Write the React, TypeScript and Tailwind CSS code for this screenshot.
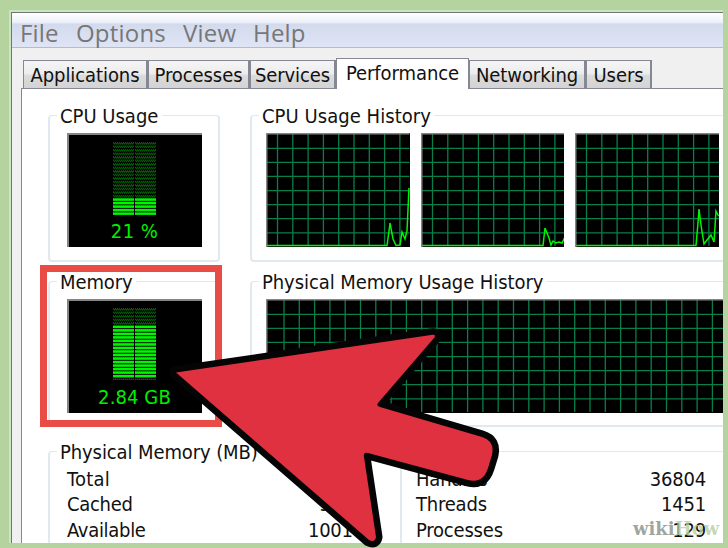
import type { ReactNode } from "react";

const ui = "[font-family:'DejaVu_Sans_Condensed','DejaVu_Sans',sans-serif] [font-stretch:condensed]";

function Group({ title, legend, className, children }: { title: string; legend: string; className: string; children?: ReactNode }) {
  return (
    <fieldset className={`shrink-0 min-w-0 rounded-[4px] border-2 border-t border-[#e1e9f0] ${className}`}>
      <legend className={`ml-[7px] h-[26px] whitespace-nowrap pl-[3px] text-[20px] leading-[28px] ${legend}`}>{title}</legend>
      {children}
    </fieldset>
  );
}

function Meter({ lit, total, value, label }: { lit: number; total: number; value: string; label: string }) {
  return (
    <div className="ml-[17px] mt-[5px] flex h-[114px] w-[135px] flex-col items-center border-l-2 border-t-2 border-[#858585] bg-black pr-[2px] pt-[7px]">
      <svg width="44" height="73" viewBox="0 0 44 73">
        <defs>
          <pattern id="unlit" width="2" height="3.52" patternUnits="userSpaceOnUse">
            <path d="M0 .4h1v1H0zM1 1.3h1v1H1z" fill="#00b800" />
          </pattern>
        </defs>
        <rect width="21" height="72" fill="url(#unlit)" />
        <rect x="22" width="21" height="72" fill="url(#unlit)" />
        {Array.from({ length: lit }, (_, i) => (
          <g key={i} fill="#00f500">
            <rect x="0" y={(total - lit + i) * 3.52} width="21" height="2.5" />
            <rect x="22" y={(total - lit + i) * 3.52} width="21" height="2.5" />
          </g>
        ))}
      </svg>
      <span className={`mt-[3px] whitespace-nowrap text-[20px] leading-[27px] text-[#00f000] ${label}`}>{value}</span>
    </div>
  );
}

function Graph({ width, first, points }: { width: number; first: number; points?: string }) {
  const cols = Array.from({ length: Math.ceil((width - first) / 15.3) }, (_, i) => first + i * 15.3);
  return (
    <svg className="shrink-0 bg-black" width={width} height="114" viewBox={`0 0 ${width} 114`}>
      {cols.map((x) => (
        <path key={x} d={`M${x} 1V113`} stroke="#087f49" strokeWidth="1.3" />
      ))}
      {Array.from({ length: 7 }, (_, i) => (
        <path key={i} d={`M1 ${15.3 + i * 14.08}H${width}`} stroke="#087f49" strokeWidth="1.3" />
      ))}
      {points && <polyline points={points} fill="none" stroke="#00f500" strokeWidth="1.5" />}
      <path d={`M.75 114V.75H${width}`} fill="none" stroke="#858585" strokeWidth="1.5" />
    </svg>
  );
}

const tabs = [
  { name: "Applications", style: "w-[125px]" },
  { name: "Processes", style: "w-[102px]" },
  { name: "Services", style: "w-[86px]" },
  { name: "Performance", style: "w-[133px]" },
  { name: "Networking", style: "w-[117px]" },
  { name: "Users", style: "w-[66px]" },
];

export default function App() {
  return (
    <div className={`relative flex h-[548px] w-[728px] overflow-hidden bg-[#b4d39e] pl-[9px] pt-[10px] text-[#111] ${ui}`}>
      <div className="h-[533px] w-[714px] overflow-hidden border-l-2 border-t-2 border-[#cbe5bd]">
        <div className="flex h-[531px] flex-col border-l border-t border-[#6e7772] bg-[#f0f0f0]">
          <nav className="flex h-[35px] shrink-0 border-b border-[#b3bad2] bg-[linear-gradient(#fff_0%,#eef1f9_27%,#d3daed_33%,#dfe5f5_100%)] pl-[8px] text-[24px] leading-[39px] tracking-[0.2px] text-[#777] [font-family:'Open_Sans','Noto_Sans',sans-serif] [font-stretch:normal]">
            <span className="w-[56px]">File</span>
            <span className="w-[107px]">Options</span>
            <span className="w-[70px]">View</span>
            <span>Help</span>
          </nav>
          <div className="flex h-[40px] shrink-0 items-end pl-[11px] tracking-[-0.08px]">
            {tabs.map((t) =>
              t.name === "Performance" ? (
                <div key={t.name} className={`relative z-10 mb-[-1px] h-[31px] whitespace-nowrap border-x border-t border-[#858794] bg-white text-center text-[20px] leading-[29px] ${t.style}`}>{t.name}</div>
              ) : (
                <div key={t.name} className={`h-[28px] whitespace-nowrap border-r-2 border-l border-t border-[#858794] bg-[linear-gradient(#f5f5f5_0%,#ececec_48%,#dcdcdc_52%,#d3d3d3_100%)] text-center text-[20px] leading-[29px] ${t.style}`}>{t.name}</div>
              ),
            )}
          </div>
          <main className="ml-[9px] h-[455px] w-[702px] shrink-0 overflow-hidden border-l border-t border-[#858794] bg-white pl-[26px] pt-[13px]">
            <div className="flex gap-[30px]">
              <Group title="CPU Usage" legend="w-[105px]" className="h-[160px] w-[172px]">
                <Meter lit={5} total={21} value="21 %" label="tracking-[0.4px]" />
              </Group>
              <Group title="CPU Usage History" legend="w-[175px] tracking-[0.05px]" className="h-[160px] w-[490px]">
                <div className="ml-[14px] mt-[5px] flex gap-[11px]">
                  <Graph width={143.5} first={11.5} points="1,112.5 121,112.5 123,98 124,90 127,106 130,112.5 134,112 136,99 139,106 141,98 143,55" />
                  <Graph width={143.5} first={11.5} points="1,112.5 122,112.5 124,95 128,105 130,112 132,108 135,110 138,109 141,110 144,104" />
                  <Graph width={144} first={11.5} points="1,112.5 121,112.5 123,90 124,76 126,92 129,111 132,107 136,102 139,109 141,78 143,82 144,83" />
                </div>
              </Group>
            </div>
            <div className="mt-[6px] flex gap-[30px]">
              <Group title="Memory" legend="w-[79px] tracking-[-0.1px]" className="h-[159px] w-[172px]">
                <Meter lit={15} total={20} value="2.84 GB" label="tracking-[0.1px]" />
              </Group>
              <Group title="Physical Memory Usage History" legend="w-[287px] tracking-[-0.08px]" className="h-[159px] w-[490px]">
                <div className="ml-[14px] mt-[5px] flex">
                  <Graph width={460} first={18} />
                </div>
              </Group>
            </div>
            <div className="mt-[11px] flex gap-[30px]">
              <Group title="Physical Memory (MB)" legend="w-[206px] tracking-[-0.1px]" className="h-[160px] w-[322px]">
                <dl className="ml-[17px] mt-[3px] grid w-[286px] grid-cols-[1fr_45px] text-[20px] leading-[25.3px] tracking-[-0.3px]">
                  <dt className="tracking-[0.3px]">Total</dt><dd />
                  <dt>Cached</dt><dd className="pl-[11px]">9</dd>
                  <dt>Available</dt><dd>1001</dd>
                </dl>
              </Group>
              <Group title="" legend="w-[60px]" className="h-[160px] w-[400px]">
                <dl className="ml-[14px] mt-[3px] grid w-[290px] grid-cols-[1fr_auto] text-[20px] leading-[25.3px] tracking-[-0.2px]">
                  <dt>Handles</dt><dd className="text-right">36804</dd>
                  <dt>Threads</dt><dd className="text-right">1451</dd>
                  <dt>Processes</dt><dd className="text-right">129</dd>
                </dl>
              </Group>
            </div>
          </main>
        </div>
      </div>
      <div className="absolute left-[40px] top-[265px] h-[162px] w-[182px] border-[7px] border-[#e94b45]" />
      <svg className="absolute left-0 top-0" width="728" height="548" viewBox="0 0 728 548">
        <path
          d="M176 372.5 431 335Q437 334 434 338L378 403Q376 406 380 407L482 437Q495 441 492 455L488 468Q483 484 468 480L368 453Q363 452 364 457L376 537Q375 543 369 540Z"
          fill="#df3140" stroke="#050505" strokeWidth="13" strokeLinejoin="round" paintOrder="stroke"
        />
      </svg>
      <div className="absolute left-[633px] top-[517px] whitespace-nowrap text-[18px] font-bold leading-[24px] text-[#929992]/90 [font-family:'DejaVu_Serif',serif] [font-stretch:normal]">
        wiki<span className="text-[#b5cda5]/80">How</span>
      </div>
    </div>
  );
}
